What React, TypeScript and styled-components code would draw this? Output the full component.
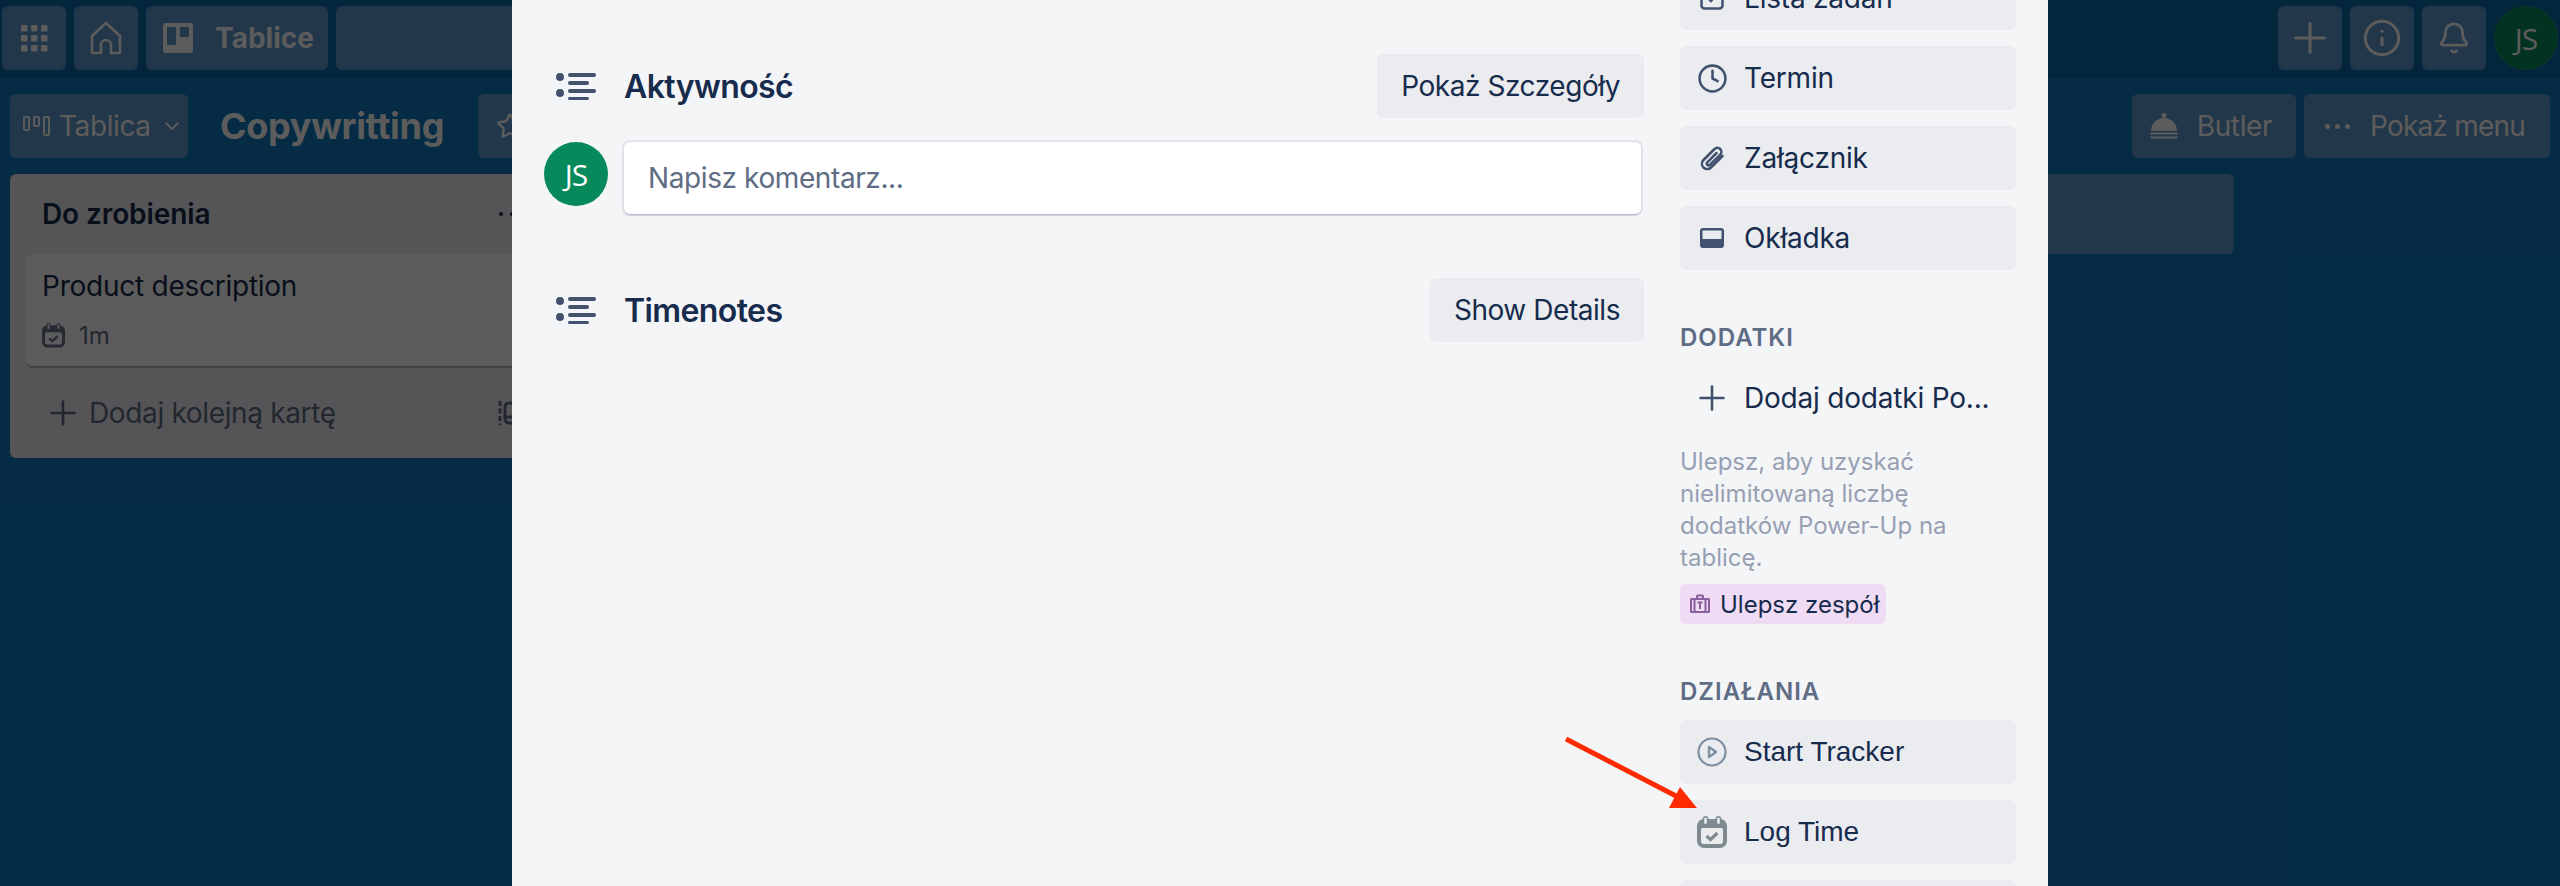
// Karta Trello otwarta na tablicy Copywritting, z przewinietym panelem bocznym

import styled, { createGlobalStyle } from 'styled-components'
import { Bell, ChevronDown, Clock, Info, Star } from 'lucide-react'

const GlobalStyle = createGlobalStyle`
  html, body {
    margin: 0;
    height: 100%;
    overflow: hidden;
    font-family: Inter, "Noto Sans", "Liberation Sans", sans-serif;
  }

  * {
    box-sizing: border-box;
  }
`

const Page = styled.div`
  position: relative;
  width: 2560px;
  height: 886px;
  overflow: hidden;
  background: #0f79bf;
  color: #fff;
`

const TopBar = styled.header`
  height: 78px;
  padding: 6px 2px;
  display: flex;
  gap: 8px;
  background: #0c6aa8;
`

const BarButton = styled.div`
  width: 64px;
  height: 64px;
  border-radius: 6px;
  display: flex;
  align-items: center;
  justify-content: center;
  background: #5f98cb;
`

const BoardsButton = styled(BarButton)`
  width: 182px;
  padding-left: 17px;
  justify-content: flex-start;
  gap: 22px;
  font-size: 28px;
  font-weight: 700;
`

const SearchBox = styled.div`
  width: 900px;
  height: 64px;
  border-radius: 6px;
  background: #5f98cb;
`

const Spacer = styled.div`
  flex: 1;
`

const Avatar = styled.div<{ $bar?: boolean }>`
  width: 64px;
  height: 64px;
  flex: none;
  border-radius: 50%;
  display: flex;
  align-items: center;
  justify-content: center;
  background: #068a5b;
  color: #fff;
  font-family: "Open Sans", "Liberation Sans", sans-serif;
  font-size: 30px;
  font-weight: 500;
  letter-spacing: -1px;
  box-shadow: ${p => (p.$bar ? 'inset 0 0 0 1px rgba(255, 255, 255, 0.12)' : 'none')};
`

const BoardBar = styled.div`
  height: 64px;
  margin-top: 16px;
  padding: 0 10px;
  display: flex;
  align-items: center;
  gap: 8px;
`

const ViewButton = styled.div`
  width: 178px;
  height: 64px;
  padding-left: 13px;
  border-radius: 6px;
  display: flex;
  align-items: center;
  gap: 9px;
  background: #5f98cb;
  font-size: 28px;
  letter-spacing: -0.4px;
`

const BoardTitle = styled.h1`
  margin: 0 26px 0 24px;
  font-size: 36px;
  font-weight: 700;
  letter-spacing: -0.3px;
`

const BoardAction = styled.div<{ $gap: number; $pad: string; $tight?: boolean }>`
  height: 64px;
  padding: ${p => p.$pad};
  border-radius: 6px;
  display: flex;
  align-items: center;
  gap: ${p => p.$gap}px;
  background: #5f98cb;
  font-size: 28px;
  letter-spacing: ${p => (p.$tight ? '-0.8px' : '-0.4px')};
`

const StarButton = styled(BoardAction)`
  width: 64px;
`

const Columns = styled.div`
  margin-top: 16px;
  padding-left: 10px;
  display: flex;
  align-items: flex-start;
  gap: 16px;
`

const List = styled.section`
  width: 544px;
  flex: none;
  height: 284px;
  padding: 0 16px;
  border-radius: 6px;
  background: #ebecf0;
  color: #172b4d;
`

const ListHead = styled.div`
  height: 80px;
  display: flex;
  align-items: center;
  justify-content: space-between;
`

const ListName = styled.h2`
  margin: 0 0 0 16px;
  font-size: 28px;
  font-weight: 600;
  letter-spacing: -0.1px;
`

const ListMenu = styled.div`
  width: 64px;
  margin-right: -6px;
  display: flex;
  justify-content: center;
`

const Card = styled.article`
  height: 112px;
  padding: 16px;
  border-radius: 6px;
  background: #fff;
  box-shadow: 0 2px 0 rgba(9, 30, 66, 0.25);
`

const CardTitle = styled.div`
  font-size: 28px;
  line-height: 32px;
  letter-spacing: -0.25px;
`

const CardMeta = styled.div`
  margin-top: 19px;
  display: flex;
  align-items: center;
  gap: 14px;
  font-size: 24px;
  color: #5e6c84;
`

const AddRow = styled.div`
  height: 40px;
  margin: 27px -8px 0 0;
  padding-left: 24px;
  display: flex;
  align-items: center;
  gap: 13px;
  font-size: 28px;
  letter-spacing: -0.35px;
  color: #5e6c84;
`

const AddSpacer = styled.div`
  flex: 1;
`

const EmptyColumn = styled.div`
  width: 544px;
  height: 80px;
  flex: none;
  border-radius: 6px;
  background: #5f98cb;
`

const Overlay = styled.div`
  position: absolute;
  inset: 0;
  display: flex;
  justify-content: center;
  background: rgba(0, 0, 0, 0.64);
`

const Modal = styled.div`
  width: 1536px;
  height: 886px;
  padding: 0 32px;
  display: grid;
  grid-template-columns: 1100px 336px;
  column-gap: 36px;
  align-items: start;
  overflow: hidden;
  background: #f4f5f7;
  color: #172b4d;
`

const Main = styled.main`
  padding-top: 54px;
`

const SectionHead = styled.div<{ $top?: number }>`
  height: 64px;
  margin-top: ${p => p.$top ?? 0}px;
  display: flex;
  align-items: center;
`

const SectionIcon = styled.div`
  width: 80px;
  padding-left: 12px;
  display: flex;
  flex: none;
`

const SectionTitle = styled.h3`
  margin: 0;
  flex: 1;
  font-size: 32px;
  font-weight: 600;
  letter-spacing: -0.6px;
`

const ActionButton = styled.div`
  height: 64px;
  padding: 0 24px;
  border-radius: 6px;
  display: flex;
  align-items: center;
  background: #eaecf0;
  font-size: 28px;
  letter-spacing: -0.45px;
`

const CommentRow = styled.div`
  margin-top: 24px;
  padding-right: 3px;
  display: flex;
  gap: 16px;
`

const CommentInput = styled.div`
  flex: 1;
  height: 72px;
  padding: 0 24px;
  border-radius: 6px;
  display: flex;
  align-items: center;
  background: #fff;
  box-shadow: 0 2px 2px -1px rgba(9, 30, 66, 0.25), 0 0 0 2px rgba(9, 30, 66, 0.08);
  font-size: 28px;
  letter-spacing: -0.4px;
  color: #5e6c84;
`

const Sidebar = styled.aside`
  margin-top: -34px;
`

const SideLabel = styled.h4`
  margin: 52px 0 12px;
  font-size: 24px;
  line-height: 32px;
  font-weight: 600;
  letter-spacing: 1px;
  color: #5e6c84;
`

const SideStack = styled.div`
  display: flex;
  flex-direction: column;
  gap: 16px;
`

const SideButton = styled.div<{ $plain?: boolean; $addon?: boolean }>`
  height: 64px;
  padding-left: 12px;
  border-radius: 6px;
  display: flex;
  align-items: center;
  background: ${p => (p.$plain ? 'transparent' : '#eaecf0')};
  font-family: ${p => (p.$addon ? '"Liberation Sans", Arial, sans-serif' : 'inherit')};
  font-size: 28px;
  letter-spacing: ${p => (p.$addon ? '0' : '-0.2px')};
`

const SideIcon = styled.span`
  width: 40px;
  margin-right: 12px;
  display: flex;
  justify-content: center;
  flex: none;
  color: #42526e;
`

const SideNote = styled.p`
  margin: 16px 0 0;
  font-size: 24px;
  line-height: 32px;
  color: #97a0b3;
`

const UpgradeBadge = styled.div`
  width: 206px;
  height: 40px;
  margin-top: 10px;
  padding-left: 10px;
  border-radius: 6px;
  display: flex;
  align-items: center;
  gap: 10px;
  background: #efdbf3;
  font-size: 24px;
  white-space: nowrap;
`

const ArrowMark = styled.svg`
  position: absolute;
  left: 1560px;
  top: 730px;
`

const GridIcon = () => (
  <svg width="28" height="28" viewBox="0 0 28 28" fill="currentColor">
    {[0, 10, 20].map(y =>
      [0, 10, 20].map(x => <rect key={`${x}-${y}`} x={x + 1} y={y + 1} width="6.5" height="6.5" rx="1"/>),
    )}
  </svg>
)

const HomeIcon = () => (
  <svg width="32" height="34" viewBox="0 0 32 34" fill="none" stroke="currentColor" strokeWidth="2.6" strokeLinejoin="round">
    <path d="M2 15 16 2l14 13v15.5a1.5 1.5 0 0 1-1.5 1.5H21v-8a5 5 0 0 0-10 0v8H3.500A1.500 1.500 0 0 1 2 30.500Z"/>
  </svg>
)

const BoardIcon = () => (
  <svg width="30" height="30" viewBox="0 0 30 30" fill="currentColor">
    <path
      fillRule="evenodd"
      d="M3 0h24a3 3 0 0 1 3 3v24a3 3 0 0 1-3 3H3a3 3 0 0 1-3-3V3a3 3 0 0 1 3-3Zm1 4v18h9V4Zm13 0v10h9V4Z"
    />
  </svg>
)

const ViewIcon = () => (
  <svg width="27" height="20" viewBox="0 0 27 20" fill="none" stroke="currentColor" strokeWidth="2">
    <rect x="1" y="1" width="5" height="13" rx="1"/>
    <rect x="11" y="1" width="5" height="9" rx="1"/>
    <rect x="21" y="1" width="5" height="18" rx="1"/>
  </svg>
)

const PlusIcon = ({ size, weight }: { size: number; weight: number }) => (
  <svg width={size} height={size} viewBox={`0 0 ${size} ${size}`} stroke="currentColor" strokeWidth={weight} strokeLinecap="round">
    <path d={`M${size / 2} 1.500V${size - 1.500}M1.500 ${size / 2}H${size - 1.500}`}/>
  </svg>
)

const ButlerIcon = () => (
  <svg width="28" height="26" viewBox="0 0 28 26" fill="currentColor">
    <circle cx="14" cy="2.500" r="2.500"/>
    <path d="M1 18a13 13 0 0 1 26 0Z"/>
    <rect y="19.500" width="28" height="2" rx="1"/>
    <rect y="23.500" width="28" height="2" rx="1"/>
  </svg>
)

const DotsIcon = ({ gap = 10, radius = 2.5 }: { gap?: number; radius?: number }) => (
  <svg width={gap * 2 + radius * 2} height={radius * 2} fill="currentColor">
    <circle cx={radius} cy={radius} r={radius}/>
    <circle cx={radius + gap} cy={radius} r={radius}/>
    <circle cx={radius + gap * 2} cy={radius} r={radius}/>
  </svg>
)

const ActivityIcon = () => (
  <svg width="40" height="28" viewBox="0 0 40 28" fill="#42526e">
    <circle cx="4" cy="5" r="4"/>
    <circle cx="4" cy="21" r="4"/>
    <rect x="12" y="1" width="28" height="4" rx="2"/>
    <rect x="12" y="9" width="21" height="4" rx="2"/>
    <rect x="12" y="17" width="28" height="4" rx="2"/>
    <rect x="12" y="25" width="21" height="3" rx="1.500"/>
  </svg>
)

const LogTimeIcon = ({ size = 30, color = '#7f8a91', ground = '#eaecf0' }: { size?: number; color?: string; ground?: string }) => (
  <svg width={size} height={size * 1.07} viewBox="0 0 30 32">
    <path
      fill={color}
      fillRule="evenodd"
      d="M7 3h16a7 7 0 0 1 7 7v15a7 7 0 0 1-7 7H7a7 7 0 0 1-7-7V10a7 7 0 0 1 7-7Zm-1 9a2 2 0 0 0-2 2v11a3 3 0 0 0 3 3h16a3 3 0 0 0 3-3V14a2 2 0 0 0-2-2Z"
    />
    <rect x="6.500" y="0.800" width="4" height="8" rx="2" fill={ground} stroke={color} strokeWidth="1.500"/>
    <rect x="19.500" y="0.800" width="4" height="8" rx="2" fill={ground} stroke={color} strokeWidth="1.500"/>
    <path d="M9.500 20l4 3.500 7-6.500" fill="none" stroke={color} strokeWidth="3.200"/>
  </svg>
)

const ChecklistIcon = () => (
  <svg width="24" height="24" viewBox="0 0 24 24" fill="none" stroke="#42526e" strokeWidth="2.500">
    <rect x="1.500" y="1.500" width="21" height="21" rx="3"/>
    <path d="M7 11l4 4 6-7"/>
  </svg>
)

const ClipIcon = () => (
  <svg width="24" height="25" viewBox="0 0 24 24" fill="none" stroke="#42526e" strokeWidth="2.500" strokeLinecap="round">
    <path d="M22.500 9.500 11 21a5.300 5.300 0 0 1-7.500-7.500L14.500 2.500a4 4 0 0 1 5.700 5.700L9.800 18.300a1.700 1.700 0 0 1-2.500-2.500L16.500 6.500"/>
  </svg>
)

const CoverIcon = () => (
  <svg width="24" height="20" viewBox="0 0 24 20" fill="#42526e">
    <path
      fillRule="evenodd"
      d="M3 0h18a3 3 0 0 1 3 3v14a3 3 0 0 1-3 3H3a3 3 0 0 1-3-3V3a3 3 0 0 1 3-3Zm0 2.500a.5.5 0 0 0-.5.500v8h19V3a.5.5 0 0 0-.5-.5Z"
    />
  </svg>
)

const PlayIcon = () => (
  <svg width="30" height="30" viewBox="0 0 30 30" fill="none" stroke="#7d8fa0" strokeWidth="2.200">
    <circle cx="15" cy="15" r="13.500"/>
    <path d="M12 10l7 5-7 5Z" strokeWidth="2.400" strokeLinejoin="round"/>
  </svg>
)

const TeamIcon = () => (
  <svg width="20" height="20" viewBox="0 0 20 20" fill="#89609e">
    <path
      fillRule="evenodd"
      d="M6 2.500A2 2 0 0 1 8 .5h4a2 2 0 0 1 2 2V4h4.500A1.500 1.500 0 0 1 20 5.500v12a1.500 1.500 0 0 1-1.500 1.500h-17A1.500 1.500 0 0 1 0 17.500v-12A1.500 1.500 0 0 1 1.500 4H6Zm2 0V4h4V2.500ZM2 6v11h1.500V6Zm3.500 0v11h9V6Zm11 0v11H18V6Zm-9 1.500h5v2h-1.500V15h-2V9.500H7.500Z"
    />
  </svg>
)

const TemplateIcon = () => (
  <svg width="48" height="26" viewBox="0 0 48 26" fill="none" stroke="#5e6c84" strokeWidth="3">
    <path d="M2 1v24" strokeDasharray="5 2.500"/>
    <rect x="7" y="3" width="38" height="20" rx="4"/>
    <path d="M8 17h36"/>
  </svg>
)

const sideTools = [
  { label: 'Lista zadań', icon: <ChecklistIcon/> },
  { label: 'Termin', icon: <Clock size={31} strokeWidth={2}/> },
  { label: 'Załącznik', icon: <ClipIcon/> },
  { label: 'Okładka', icon: <CoverIcon/> },
]

const App = () => {
  return (
    <Page>
      <GlobalStyle/>
      <TopBar>
        <BarButton><GridIcon/></BarButton>
        <BarButton><HomeIcon/></BarButton>
        <BoardsButton><BoardIcon/>Tablice</BoardsButton>
        <SearchBox/>
        <Spacer/>
        <BarButton><PlusIcon size={32} weight={3}/></BarButton>
        <BarButton><Info size={40} strokeWidth={1.8}/></BarButton>
        <BarButton><Bell size={34} strokeWidth={2}/></BarButton>
        <Avatar $bar>JS</Avatar>
      </TopBar>

      <BoardBar>
        <ViewButton>
          <ViewIcon/>Tablica<ChevronDown size={24} strokeWidth={1.8}/>
        </ViewButton>
        <BoardTitle>Copywritting</BoardTitle>
        <StarButton $gap={0} $pad="0 18px"><Star size={30} strokeWidth={2}/></StarButton>
        <Spacer/>
        <BoardAction $gap={19} $pad="0 24px 0 18px"><ButlerIcon/>Butler</BoardAction>
        <BoardAction $gap={20} $pad="0 25px 0 21px" $tight>
          <DotsIcon/>Pokaż menu
        </BoardAction>
      </BoardBar>

      <Columns>
        <List>
          <ListHead>
            <ListName>Do zrobienia</ListName>
            <ListMenu><DotsIcon gap={11} radius={2}/></ListMenu>
          </ListHead>
          <Card>
            <CardTitle>Product description</CardTitle>
            <CardMeta>
              <LogTimeIcon size={23} color="#6b778c" ground="#fff"/>1m
            </CardMeta>
          </Card>
          <AddRow>
            <PlusIcon size={26} weight={2.6}/>
            Dodaj kolejną kartę
            <AddSpacer/>
            <TemplateIcon/>
          </AddRow>
        </List>
        <EmptyColumn/>
        <EmptyColumn/>
        <EmptyColumn/>
      </Columns>

      <Overlay>
        <Modal>
          <Main>
            <SectionHead>
              <SectionIcon><ActivityIcon/></SectionIcon>
              <SectionTitle>Aktywność</SectionTitle>
              <ActionButton>Pokaż Szczegóły</ActionButton>
            </SectionHead>
            <CommentRow>
              <Avatar>JS</Avatar>
              <CommentInput>Napisz komentarz...</CommentInput>
            </CommentRow>
            <SectionHead $top={64}>
              <SectionIcon><ActivityIcon/></SectionIcon>
              <SectionTitle>Timenotes</SectionTitle>
              <ActionButton>Show Details</ActionButton>
            </SectionHead>
          </Main>

          <Sidebar>
            <SideStack>
              {sideTools.map(tool => (
                <SideButton key={tool.label}>
                  <SideIcon>{tool.icon}</SideIcon>
                  {tool.label}
                </SideButton>
              ))}
            </SideStack>

            <SideLabel>DODATKI</SideLabel>
            <SideButton $plain>
              <SideIcon><PlusIcon size={26} weight={2.6}/></SideIcon>
              Dodaj dodatki Po...
            </SideButton>
            <SideNote>
              Ulepsz, aby uzyskać
              <br/>nielimitowaną liczbę
              <br/>dodatków Power-Up na
              <br/>tablicę.
            </SideNote>
            <UpgradeBadge><TeamIcon/>Ulepsz zespół</UpgradeBadge>

            <SideLabel>DZIAŁANIA</SideLabel>
            <SideStack>
              <SideButton $addon>
                <SideIcon><PlayIcon/></SideIcon>
                Start Tracker
              </SideButton>
              <SideButton $addon>
                <SideIcon><LogTimeIcon/></SideIcon>
                Log Time
              </SideButton>
              <SideButton/>
            </SideStack>
          </Sidebar>
        </Modal>
      </Overlay>

      {/* czerwona strzalka z adnotacji */}
      <ArrowMark width="140" height="80" viewBox="0 0 140 80">
        <path d="M6 9 118 67" stroke="#ff2a00" strokeWidth="5" fill="none"/>
        <path d="M120 57 109 78h28Z" fill="#ff2a00"/>
      </ArrowMark>
    </Page>
  )
}

export default App
